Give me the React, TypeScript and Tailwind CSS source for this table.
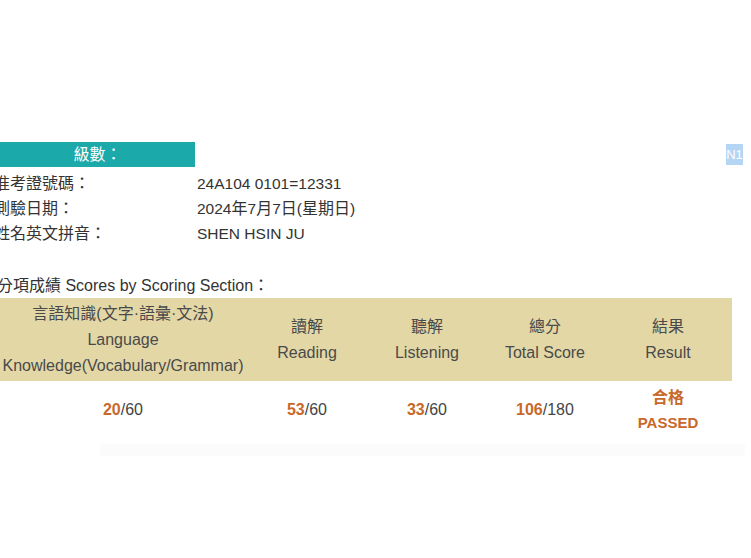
import React from "react";

const font = { fontFamily: '"Liberation Sans", "Noto Sans CJK TC", Arial, sans-serif' };

function Score({ got, total }: { got: string; total: string }) {
  return (
    <span className="text-[16px] text-[#444]">
      <span className="font-bold text-[#c8692a]">{got}</span>/{total}
    </span>
  );
}

export default function App() {
  const info: [string, React.ReactNode][] = [
    ["准考證號碼：", "24A104 0101=12331"],
    [
      "測驗日期：",
      <span>
        2024<span className="text-[16px]">年</span>7<span className="text-[16px]">月</span>7
        <span className="text-[16px]">日</span>(<span className="text-[16px]">星期日</span>)
      </span>,
    ],
    ["姓名英文拼音：", "SHEN HSIN JU"],
  ];
  return (
    <div className="w-[751px] h-[558px] bg-white overflow-hidden text-[#333]" style={font}>
      <div className="flex flex-col pt-[142px]">
        <div className="flex items-start justify-between pr-[8px]">
          <div className="w-[195px] h-[25px] bg-[#1ba9a9] text-white text-[16px] leading-[25px] text-center">
            級數：
          </div>
          <span className="mt-[2px] h-[21px] w-[17px] bg-[#b5d5f5] text-white text-[13px] leading-[21px] text-center overflow-hidden">
            N1
          </span>
        </div>
        <div className="mt-[4px] flex flex-col text-[15.5px] leading-[25px] -ml-[6px]">
          {info.map(([k, v]) => (
            <div key={k} className="flex">
              <div className="w-[203px] text-[16px]">{k}</div>
              <div>{v}</div>
            </div>
          ))}
        </div>
        <div className="mt-[27px] text-[16px] leading-[25px] -ml-[3px]">分項成績 Scores by Scoring Section：</div>
        <div className="w-[732px] h-[83px] bg-[#e3d7a6] flex text-[16px] text-[#4a4a4a]">
          <div className="w-[246px] flex flex-col items-center justify-center leading-[26px]">
            <div>言語知識(文字·語彙·文法)</div>
            <div>Language</div>
            <div className="whitespace-nowrap">Knowledge(Vocabulary/Grammar)</div>
          </div>
          <div className="w-[122px] flex flex-col items-center justify-center leading-[26px]">
            <div>讀解</div>
            <div>Reading</div>
          </div>
          <div className="w-[118px] flex flex-col items-center justify-center leading-[26px]">
            <div>聽解</div>
            <div>Listening</div>
          </div>
          <div className="w-[118px] flex flex-col items-center justify-center leading-[26px]">
            <div>總分</div>
            <div>Total Score</div>
          </div>
          <div className="w-[128px] flex flex-col items-center justify-center leading-[26px]">
            <div>結果</div>
            <div>Result</div>
          </div>
        </div>
        <div className="w-[732px] h-[58px] flex">
          <div className="w-[246px] flex items-center justify-center"><Score got="20" total="60" /></div>
          <div className="w-[122px] flex items-center justify-center"><Score got="53" total="60" /></div>
          <div className="w-[118px] flex items-center justify-center"><Score got="33" total="60" /></div>
          <div className="w-[118px] flex items-center justify-center"><Score got="106" total="180" /></div>
          <div className="w-[128px] flex flex-col items-center justify-center leading-[25px] font-bold text-[#c8692a] text-[15px]">
            <div className="text-[16px]">合格</div>
            <div>PASSED</div>
          </div>
        </div>
        <div className="ml-[100px] w-[645px] h-[12px] mt-[5px] bg-[#fbfbfb]" />
      </div>
    </div>
  );
}
